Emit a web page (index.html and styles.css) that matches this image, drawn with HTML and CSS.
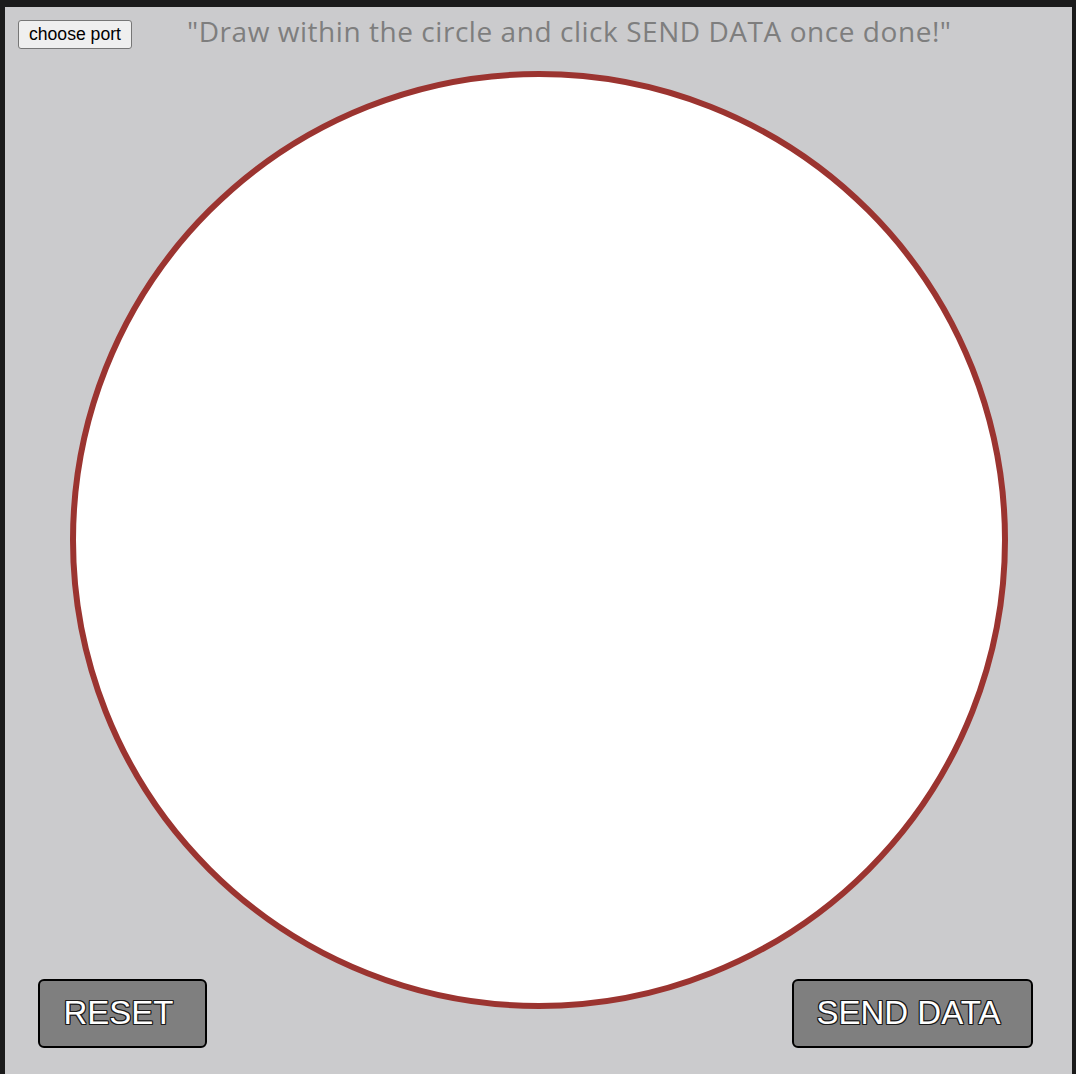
FILE: index.html
```html
<!DOCTYPE html>
<html>
<head>
<meta charset="utf-8">
<link rel="stylesheet" href="styles.css">
</head>
<body>
<main class="stage">
  <header class="header">
    <button class="port-btn">choose port</button>
    <h1 class="title">"Draw within the circle and click SEND DATA once done!"</h1>
  </header>
  <div class="circle"></div>
  <footer class="footer">
    <button class="action-btn reset-btn">RESET</button>
    <button class="action-btn send-btn">SEND DATA</button>
  </footer>
</main>
</body>
</html>
```

FILE: styles.css
```css
html, body {
  margin: 0;
  padding: 0;
  background: #1b1b1b;
  overflow: hidden;
}

.stage {
  margin: 7px 0 0 5px;
  width: 1067px;
  height: 1067px;
  background: #cbcbcd;
  display: grid;
  grid-template-columns: 1fr;
  grid-template-rows: 1fr;
}

.header, .circle, .footer {
  grid-area: 1 / 1;
  align-self: start;
}

.header {
  display: flex;
  align-items: flex-start;
  padding: 13px 0 0 13px;
}

.port-btn {
  font-family: "Liberation Sans", Arial, sans-serif;
  font-size: 17.6px;
  height: 29px;
  padding: 0 10px;
  background: #efefef;
  color: #000;
  border: 1px solid #767676;
  border-radius: 3px;
  line-height: 1;
}

.title {
  margin: -3px 0 0 55px;
  font-family: "Open Sans", sans-serif;
  font-weight: 400;
  font-size: 28px;
  letter-spacing: 0.55px;
  color: #7e7e7e;
  line-height: 28px;
  white-space: nowrap;
}

.circle {
  justify-self: center;
  margin-top: 64px;
  width: 938px;
  height: 938px;
  box-sizing: border-box;
  border: 6px solid #9b3430;
  border-radius: 50%;
  background: #ffffff;
}

.footer {
  margin-top: 972px;
  display: flex;
  justify-content: space-between;
  padding: 0 39px 0 33px;
}

.action-btn {
  box-sizing: border-box;
  height: 69px;
  background: #7f7f7f;
  border: 2px solid #000;
  border-radius: 6px;
  font-family: "Liberation Sans", Arial, sans-serif;
  font-size: 33px;
  line-height: 1;
  color: #fff;
  text-align: center;
  padding: 0 8px 3px 0;
  text-shadow: 1px 0 0 #1a1a1a, -1px 0 0 #1a1a1a, 0 1px 0 #1a1a1a, 0 -1px 0 #1a1a1a,
               1px 1px 0 #1a1a1a, -1px -1px 0 #1a1a1a, 1px -1px 0 #1a1a1a, -1px 1px 0 #1a1a1a;
}

.reset-btn { width: 169px; }
.send-btn { width: 241px; }
```
